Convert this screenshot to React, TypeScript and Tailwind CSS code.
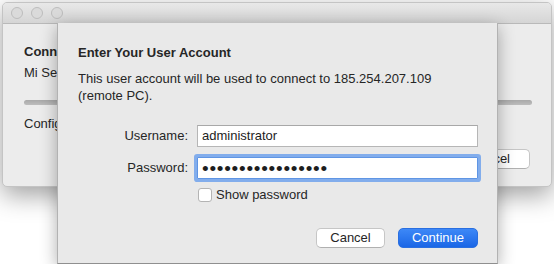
import type { FC } from 'react';

const passwordLength = 17;

const TrafficLights: FC = function TrafficLights() {
	return (
		<div className="flex items-center gap-[8px] pl-[8px]">
			{[0, 1, 2].map((index) => (
				<span
					key={index}
					className="h-[12px] w-[12px] rounded-full border border-[#bcbcbc] bg-[#dadada]"
				/>
			))}
		</div>
	);
};

// The window behind the sheet; its text runs under the sheet, so clip it at the sheet edge
const BackgroundWindow: FC = function BackgroundWindow() {
	return (
		<div className="flex h-[185px] w-[550px] flex-col overflow-hidden rounded-[5px] border border-[#c4c4c4] bg-[#ececec] shadow-[0_8px_26px_rgba(0,0,0,0.38)]">
			<div className="flex h-[21px] shrink-0 items-center border-b border-[#b9b9b9] bg-gradient-to-b from-[#e8e8e8] to-[#d5d5d5]">
				<TrafficLights />
			</div>
			<div className="flex flex-col px-[21px] pt-[20px] text-[13px] leading-4 text-[#262626]">
				<div className="w-[33px] overflow-hidden font-bold whitespace-nowrap">
					Connecting to Remote PC
				</div>
				<div className="mt-[5px] w-[33px] overflow-hidden whitespace-nowrap">Mi Server</div>
				<div className="mt-[19px] h-[5px] w-[508px] rounded-full bg-gradient-to-b from-[#a9a9a9] to-[#bdbdbd]" />
				<div className="mt-[11px] w-[33px] overflow-hidden whitespace-nowrap">
					Configuring remote session...
				</div>
				<div className="mt-[17px] flex justify-end">
					<div className="flex h-[20px] w-[80px] items-center justify-end overflow-hidden rounded-[5px] border border-[#c6c6c6] border-b-[#b0b0b0] bg-white pr-[19px]">
						Cancel
					</div>
				</div>
			</div>
		</div>
	);
};

const TextField: FC<{ focused?: boolean; children: React.ReactNode }> = function TextField({
	focused = false,
	children,
}) {
	return (
		<div
			className={
				focused
					? 'flex h-[22px] items-center rounded-[1px] border border-[#5f95e4] bg-white pl-[4px] shadow-[0_0_0_3px_#82adec]'
					: 'flex h-[22px] items-center border border-[#b6b6b6] border-t-[#a8a8a8] bg-white pl-[4px]'
			}
		>
			{children}
		</div>
	);
};

const AccountSheet: FC = function AccountSheet() {
	return (
		<div className="absolute top-[23px] left-[57px] flex h-[241px] w-[441px] flex-col border-x border-b border-x-[#b2b2b2] border-b-[#8f8f8f] bg-[#e9e9e9] pt-[22px] pr-[19px] pl-[20px] text-[13px] leading-4 text-[#262626] shadow-[0_4px_16px_rgba(0,0,0,0.32)]">
			<div className="font-bold">Enter Your User Account</div>
			<div className="mt-[9px] leading-[17px]">
				This user account will be used to connect to 185.254.207.109
				<br />
				(remote PC).
			</div>

			<div className="mt-[21px] grid grid-cols-[110px_1fr] items-center gap-x-[9px] gap-y-[10px]">
				<label className="text-right">Username:</label>
				<TextField>
					<span className="text-[#1d1d1d]">administrator</span>
				</TextField>
				<label className="text-right">Password:</label>
				<TextField focused>
					<span className="text-[19px] leading-none tracking-[0.75px] text-[#1d1d1d]">
						{'•'.repeat(passwordLength)}
					</span>
				</TextField>
				<div />
				<div className="mt-[-2px] flex h-[16px] items-center gap-[4px] pl-[1px]">
					<span className="h-[14px] w-[14px] rounded-[3px] border border-[#b4b4b4] bg-white" />
					<span>Show password</span>
				</div>
			</div>

			<div className="mt-[25px] flex justify-end gap-[13px]">
				<button className="flex h-[20px] w-[69px] items-center justify-center rounded-[5px] border border-[#c6c6c6] border-b-[#b0b0b0] bg-white text-[#262626]">
					Cancel
				</button>
				<button className="flex h-[20px] w-[80px] items-center justify-center rounded-[5px] border border-[#2a6fe0] bg-gradient-to-b from-[#3d88f7] to-[#1a66e6] text-white">
					Continue
				</button>
			</div>
		</div>
	);
};

export default function App() {
	return (
		<div className="relative h-[264px] w-[554px] overflow-hidden bg-white p-[2px] font-['Liberation_Sans',Arial,sans-serif] antialiased">
			<BackgroundWindow />
			<AccountSheet />
		</div>
	);
}
